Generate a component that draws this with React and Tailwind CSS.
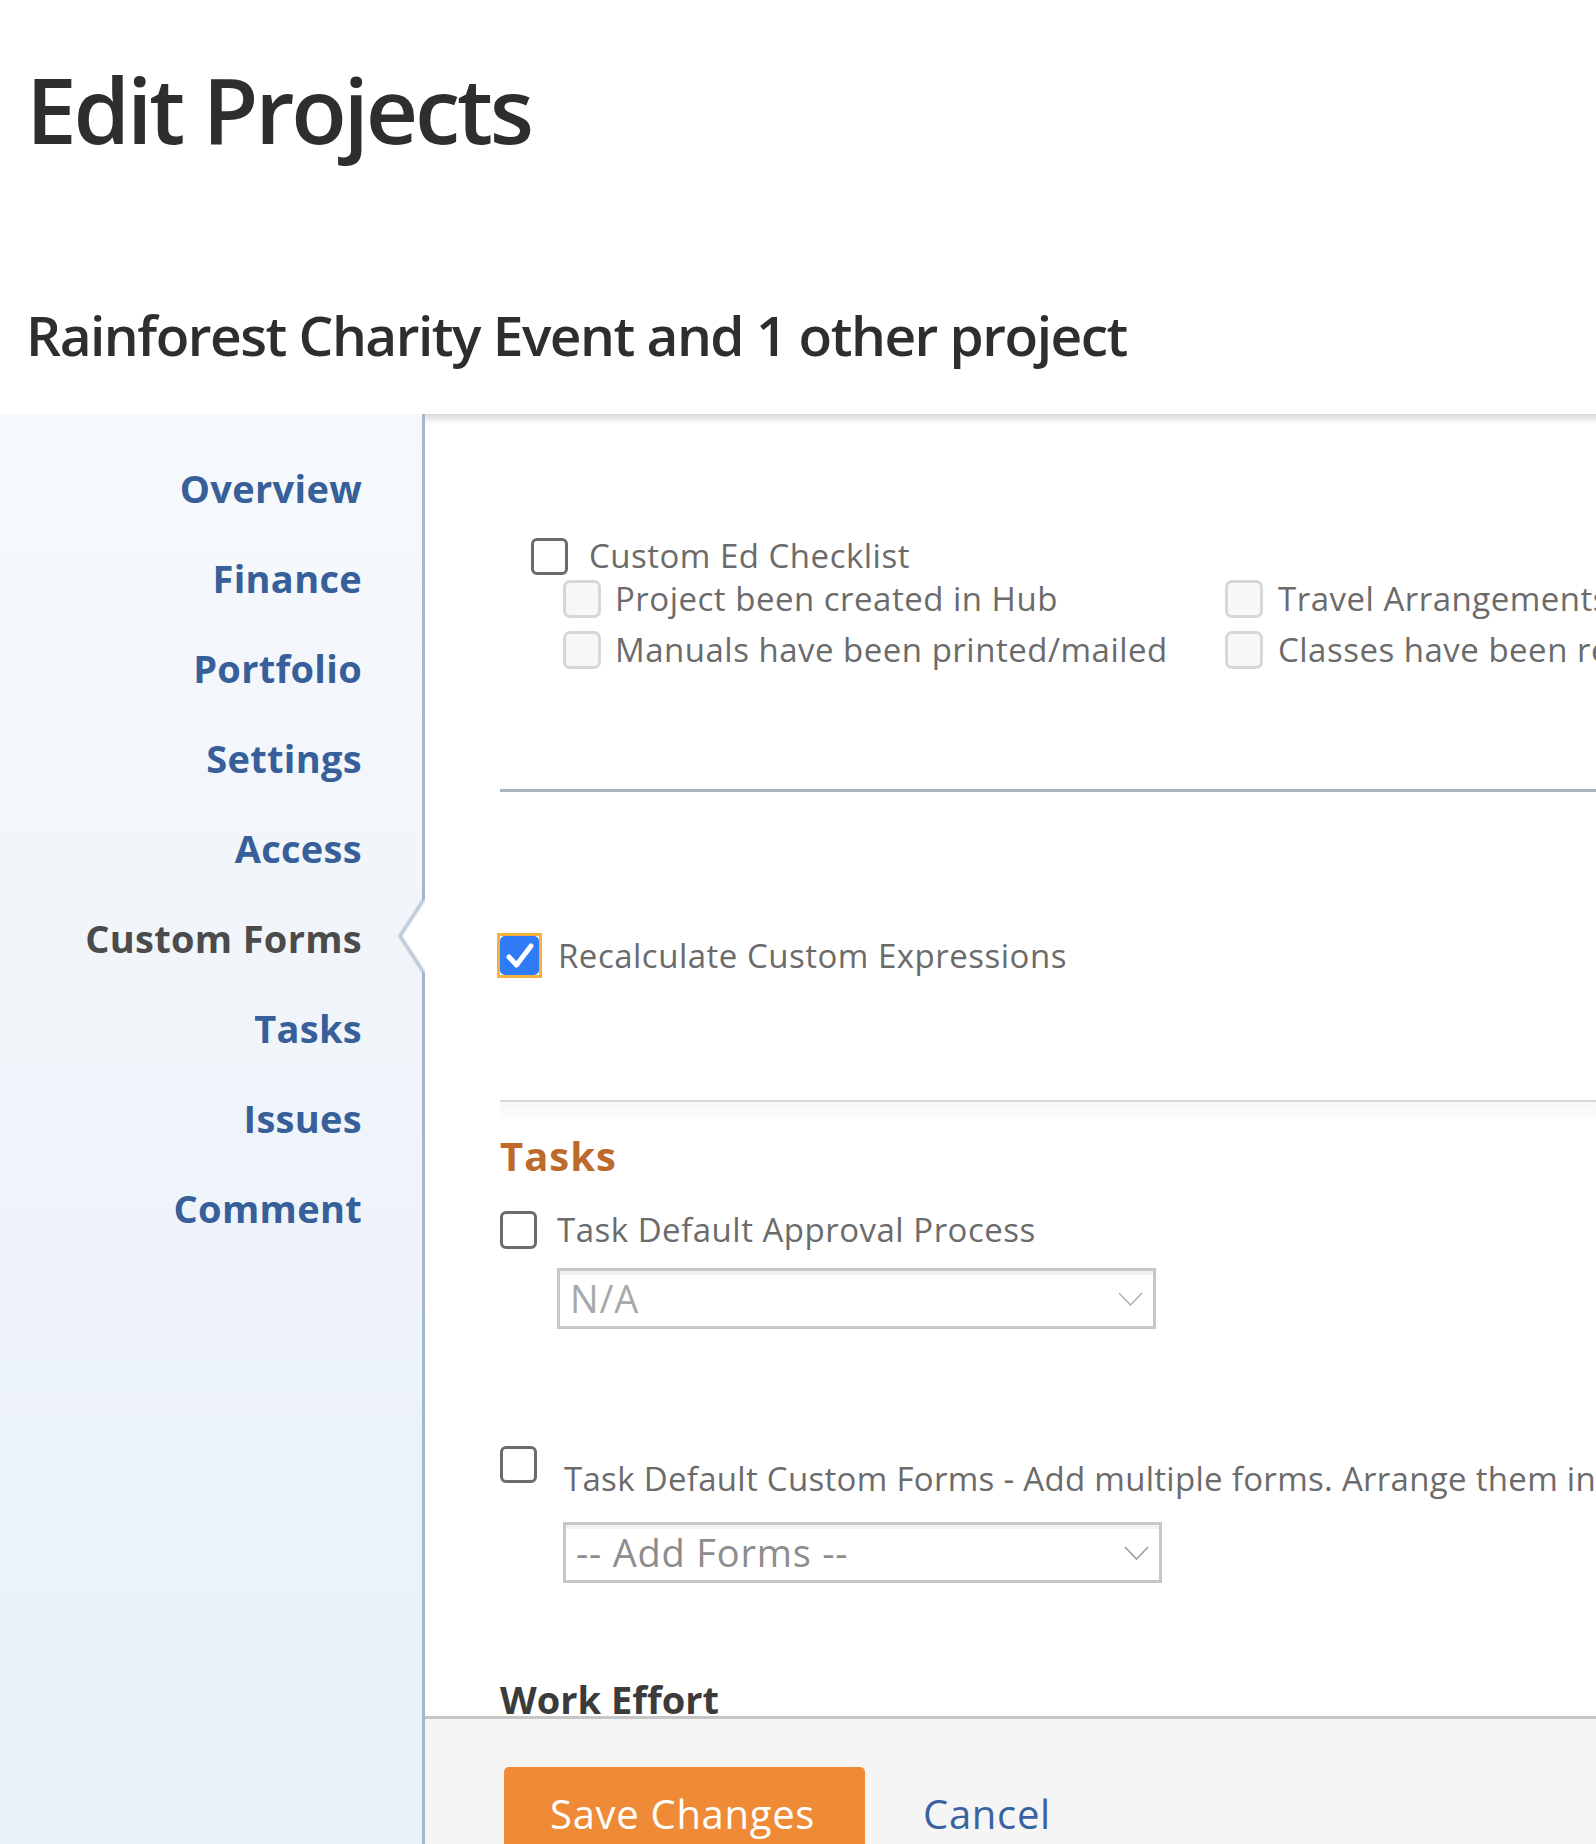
import React from "react"

const navItems = ["Overview", "Finance", "Portfolio", "Settings", "Access", "Custom Forms", "Tasks", "Issues", "Comment"]

function Box({ light }) {
    if (light) {
        return <div className="w-[38px] h-[38px] shrink-0 rounded-[7px] border-[3px] border-[#d7d7d7] bg-[#f7f7f7]" />
    }
    return <div className="w-[37px] h-[37px] shrink-0 rounded-[6px] border-[3px] border-[#6b6b6b] bg-white" />
}

function Chevron({ color }) {
    return (
        <svg width="25" height="14" viewBox="0 0 25 14" fill="none">
            <path d="M1 1 L12.5 13 L24 1" stroke={color} strokeWidth="1.6" />
        </svg>
    )
}

function SelectBox({ label, color, chevron }) {
    return (
        <div className="w-[599px] h-[61px] border-[3px] border-[#c7c7c7] bg-white flex flex-col">
            <div className="h-[4px] bg-[#f1f1f1]" />
            <div className="flex-1 flex items-center justify-between pl-[10px] pr-[10px] -mt-[4px]">
                <span className={`text-[38px] leading-[55px] tracking-[0.8px] ${color}`}>{label}</span>
                <Chevron color={chevron} />
            </div>
        </div>
    )
}

export default function App() {
    return (
        <div className="w-[1596px] h-[1844px] overflow-hidden bg-white font-['Open_Sans',sans-serif]">
            <header className="h-[414px] pl-[26px] pt-[64px] text-[#2e2e2e]">
                <h1 className="text-[91px] leading-[91px] font-semibold tracking-[-3.2px] whitespace-nowrap">Edit Projects</h1>
                <h2 className="mt-[152px] text-[55px] leading-[55px] font-semibold tracking-[-1.5px] whitespace-nowrap">
                    Rainforest Charity Event and 1 other project
                </h2>
            </header>

            <div className="flex h-[1430px]">
                <nav className="w-[422px] shrink-0 bg-gradient-to-b from-[#f6f9fc] to-[#e9f0f9] pt-[29px] pr-[60px] text-right">
                    {navItems.map((item) => (
                        <div
                            key={item}
                            className={`text-[38px] leading-[90px] font-bold tracking-[0.3px] ${item === "Custom Forms" ? "text-[#4b4b4b]" : "text-[#375f99]"}`}
                        >
                            {item}
                        </div>
                    ))}
                </nav>

                <div className="relative w-[3px] shrink-0 bg-[#a6b7c9]">
                    <svg className="absolute top-[486px] -left-[25px]" width="28" height="72" viewBox="0 0 28 72">
                        <defs>
                            <filter id="soft" x="-20%" y="-20%" width="140%" height="140%">
                                <feGaussianBlur stdDeviation="0.9" />
                            </filter>
                        </defs>
                        <polygon points="28,-2 3,36 28,74" fill="#ffffff" />
                        <polyline points="26.5,0 3,36 26.5,72" fill="none" stroke="#a6b7c9" strokeWidth="2.6" filter="url(#soft)" />
                    </svg>
                </div>

                <main className="flex-1 min-w-0 flex flex-col">
                    <div className="flex-1 overflow-hidden flex flex-col">
                        <div className="h-[10px] shrink-0 bg-gradient-to-b from-[#dadada] to-white" />
                        <div className="pl-[75px] flex flex-col text-[33px] tracking-[0.5px] text-[#6b6b6b] whitespace-nowrap">
                            {/* checklist */}
                            <div className="ml-[31px] mt-[112px] flex flex-col">
                                <div className="flex items-center gap-[21px]">
                                    <Box />
                                    <span className="leading-[40px]">Custom Ed Checklist</span>
                                </div>
                                <div className="mt-[3px] ml-[32px] grid grid-cols-[662px_auto] gap-y-[11px]">
                                    <div className="flex items-center gap-[14px]">
                                        <Box light />
                                        <span className="leading-[40px]">Project been created in Hub</span>
                                    </div>
                                    <div className="flex items-center gap-[15px]">
                                        <Box light />
                                        <span className="leading-[40px]">Travel Arrangements made</span>
                                    </div>
                                    <div className="flex items-center gap-[14px]">
                                        <Box light />
                                        <span className="leading-[40px]">Manuals have been printed/mailed</span>
                                    </div>
                                    <div className="flex items-center gap-[15px]">
                                        <Box light />
                                        <span className="leading-[40px]">Classes have been registered</span>
                                    </div>
                                </div>
                            </div>

                            <div className="mt-[119px] h-[3px] bg-[#aab4be]" />

                            {/* recalc */}
                            <div className="mt-[141px] -ml-[3px] flex items-center gap-[16px]">
                                <div className="w-[45px] h-[45px] shrink-0 border-[3px] border-[#f4b13e] bg-white">
                                    <div className="w-full h-full rounded-[5px] bg-[#2f7bf5] flex items-center justify-center">
                                        <svg width="28" height="26" viewBox="0 0 28 26" fill="none">
                                            <path d="M3 14 L10.5 22 L25 3" stroke="#ffffff" strokeWidth="5" strokeLinecap="round" strokeLinejoin="round" />
                                        </svg>
                                    </div>
                                </div>
                                <span className="leading-[40px]">Recalculate Custom Expressions</span>
                            </div>

                            <div className="mt-[122px] h-[2px] bg-[#d8d8d8]" />
                            <div className="h-[20px] bg-gradient-to-b from-[#f6f6f6] to-white" />

                            {/* tasks */}
                            <h3 className="mt-[10px] text-[40px] leading-[48px] font-bold tracking-[1px] text-[#bd6a2c]">Tasks</h3>

                            <div className="mt-[30px] flex items-center gap-[20px]">
                                <div className="w-[37px] h-[38px] shrink-0 rounded-[6px] border-[3px] border-[#6b6b6b] bg-white" />
                                <span className="leading-[40px]">Task Default Approval Process</span>
                            </div>
                            <div className="mt-[18px] ml-[57px] tracking-normal">
                                <SelectBox label="N/A" color="text-[#a9a9a9]" chevron="#b3b3b3" />
                            </div>

                            <div className="mt-[117px] flex items-start gap-[27px]">
                                <Box />
                                <span className="mt-[13px] leading-[40px] tracking-[0.3px]">
                                    Task Default Custom Forms - Add multiple forms. Arrange them in the order you want them to appear.
                                </span>
                            </div>
                            <div className="mt-[23px] ml-[63px] tracking-normal">
                                <SelectBox label="-- Add Forms --" color="text-[#8d8d8d]" chevron="#9c9c9c" />
                            </div>

                            <h3 className="mt-[92px] text-[38px] leading-[48px] font-bold tracking-normal text-[#3b3b3b]">Work Effort</h3>
                        </div>
                    </div>

                    <footer className="h-[128px] shrink-0 overflow-hidden border-t-[3px] border-[#c6c6c6] bg-[#f5f5f5] pl-[79px] pt-[48px] flex items-start">
                        <div className="w-[361px] h-[120px] shrink-0 rounded-[5px] bg-[#ef8a36] pl-[46px] pt-[20px] text-[40px] leading-[54px] tracking-[0.7px] text-white whitespace-nowrap cursor-pointer">
                            Save Changes
                        </div>
                        <a className="ml-[58px] pt-[20px] text-[40px] leading-[54px] tracking-[0.7px] text-[#3b62a0] whitespace-nowrap cursor-pointer">Cancel</a>
                    </footer>
                </main>
            </div>
        </div>
    )
}
